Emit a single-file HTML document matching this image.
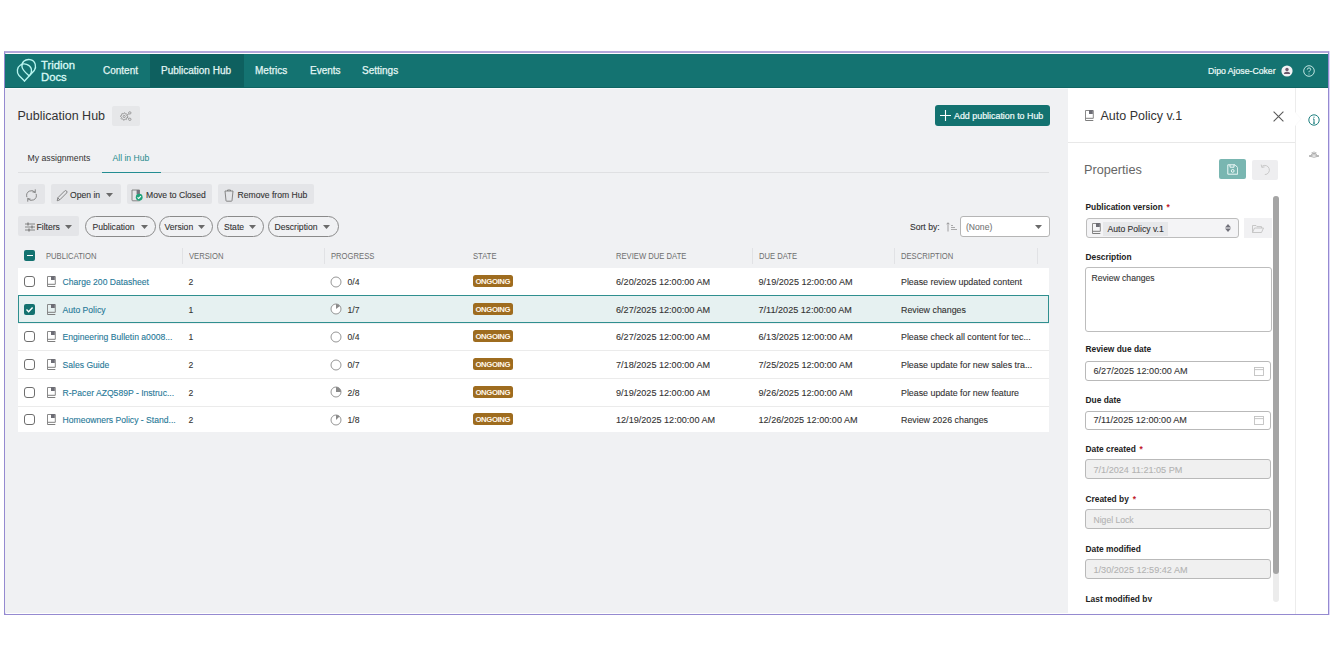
<!DOCTYPE html>
<html><head><meta charset="utf-8">
<style>
*{box-sizing:border-box;margin:0;padding:0}
html,body{width:1334px;height:667px;overflow:hidden;background:#fff;font-family:"Liberation Sans",sans-serif;color:#333}
.a{position:absolute;white-space:nowrap}
#frame{position:absolute;left:4px;top:51px;width:1325px;height:564px;border:1px solid #958ad0;border-top:2px solid #b3a8da;box-shadow:inset 1px 0 0 #d6cff8,1px 0 0 #ddd6fb}
#nav{position:absolute;left:5px;top:54px;width:1323px;height:34px;background:#147371;border-bottom:1px solid #0f6563}
#navact{position:absolute;left:150px;top:54px;width:94px;height:33px;background:#0e605f}
.nt{color:#e3f6f4;font-size:10px;top:65.3px;-webkit-text-stroke:0.25px #e3f6f4}
#main{position:absolute;left:5px;top:88px;width:1063px;height:524.5px;background:#f0f1f3;border-top:1px solid #f8fafb}
#panel{position:absolute;left:1068px;top:88px;width:227px;height:526px;background:#fff}
#rail{position:absolute;left:1295px;top:88px;width:32px;height:526px;background:#fff;border-left:1px solid #ececec}
.btn{position:absolute;top:184px;height:20px;background:#e4e5e8;border-radius:2px}
.pill{position:absolute;top:216px;height:20.5px;border:1px solid #8a8a8a;border-radius:11px}
.t9{font-size:8.6px;color:#333;-webkit-text-stroke:0.1px currentColor}
.hdr{font-size:8.6px;color:#6e6e6e;top:250.5px;transform:scaleX(0.89);transform-origin:0 0}
.row{position:absolute;left:18px;width:1031px;background:#fff;border-bottom:1px solid #ebebeb}
.cb{position:absolute;left:23.5px;width:11.3px;height:11px;border:1.1px solid #6e6e6e;border-radius:3px;background:#fff}
.lnk{color:#1f7897;font-size:8.6px;-webkit-text-stroke:0.1px currentColor}
.badge{position:absolute;left:473px;width:40px;height:12.3px;background:#9e6c1f;border-radius:2.5px;color:#fff7ea;font-size:7.7px;font-weight:bold;text-align:center;line-height:13.3px;letter-spacing:-0.35px;padding-right:0.3px}
.lbl{font-size:8.4px;font-weight:bold;color:#222}
.inp{position:absolute;left:1085px;width:186px;height:20px;border:1px solid #b9b9b9;border-radius:3px;background:#fff}
.dis{background:#f0f0f0}
.star{color:#c0202a;margin-left:1.5px}
</style></head><body>
<div id="frame"></div>
<div id="nav"></div>
<div id="navact"></div>
<!-- logo -->
<svg class="a" style="left:14px;top:56px" width="26" height="28" viewBox="0 0 26 28" fill="none" stroke="#b8f6f0" stroke-width="1.35" stroke-linejoin="round" stroke-linecap="round"><path d="M 10.50 25.00 L 20.30 14.50 C 22.60 11.00 21.80 4.50 16.00 3.60 C 11.00 2.80 7.20 6.50 8.00 11.00 C 8.70 14.50 12.00 17.00 15.20 19.90"/><path d="M 10.50 25.00 L 5.00 19.50 C 2.30 16.50 3.00 11.20 6.50 9.00 C 10.00 6.80 15.80 8.20 17.20 12.50 C 18.00 15.50 17.00 18.00 15.20 19.90"/></svg>
<div class="a" style="left:41px;top:58.5px;font-size:11.3px;line-height:12.5px;color:#d9faf6;-webkit-text-stroke:0.3px #d9faf6">Tridion<br>Docs</div>
<div class="a nt" style="left:103px">Content</div>
<div class="a nt" style="left:161px">Publication Hub</div>
<div class="a nt" style="left:255px">Metrics</div>
<div class="a nt" style="left:310px">Events</div>
<div class="a nt" style="left:362px">Settings</div>
<div class="a" style="left:1208px;top:66px;font-size:8.7px;color:#eefbf9;-webkit-text-stroke:0.2px #eefbf9">Dipo Ajose-Coker</div>
<svg class="a" style="left:1281px;top:65px" width="12" height="12" viewBox="0 0 12 12"><circle cx="6" cy="6" r="5.6" fill="#f2f2f4"/><circle cx="6" cy="4.5" r="1.7" fill="#6d5a6d"/><path d="M2.9 9 Q3 6.8 6 6.8 Q9 6.8 9.1 9 Z" fill="#6d5a6d"/></svg>
<svg class="a" style="left:1302.5px;top:64.5px" width="12" height="12" viewBox="0 0 12 12" fill="none" stroke="#d2f1ed" stroke-width="0.9"><circle cx="6" cy="6" r="5.3"/><path d="M4.3 4.6 Q4.3 2.9 6 2.9 Q7.7 2.9 7.7 4.4 Q7.7 5.4 6.6 5.9 Q6 6.2 6 7.2"/><circle cx="6" cy="8.9" r="0.5" fill="#d2f1ed" stroke="none"/></svg>

<div id="main"></div>
<div id="panel"></div>
<div id="rail"></div>

<!-- title -->
<div class="a" style="left:17.5px;top:108.7px;font-size:12.5px;color:#333">Publication Hub</div>
<div class="a" style="left:112px;top:106px;width:28px;height:19.5px;background:#e6e7e9;border-radius:2px"></div>
<svg class="a" style="left:119.5px;top:110.5px" width="12" height="10" viewBox="0 0 12 10" fill="none" stroke="#8c8c8c" stroke-width="0.8" stroke-linejoin="round"><path d="M4.20 1.80 L4.92 1.87 L5.27 2.91 L5.76 3.17 L6.82 2.88 L7.28 3.44 L6.79 4.43 L6.95 4.95 L7.90 5.50 L7.83 6.22 L6.79 6.57 L6.53 7.06 L6.82 8.12 L6.26 8.58 L5.27 8.09 L4.75 8.25 L4.20 9.20 L3.48 9.13 L3.13 8.09 L2.64 7.83 L1.58 8.12 L1.12 7.56 L1.61 6.57 L1.45 6.05 L0.50 5.50 L0.57 4.78 L1.61 4.43 L1.87 3.94 L1.58 2.88 L2.14 2.42 L3.13 2.91 L3.65 2.75 Z"/><circle cx="4.2" cy="5.5" r="1.1"/><circle cx="9.8" cy="1.9" r="1.2"/><circle cx="9.8" cy="8.3" r="1.2"/><path d="M7.2 4.6 L8.7 2.7 M7.2 6.3 L8.7 7.5"/></svg>
<div class="a" style="left:934.5px;top:105px;width:115.5px;height:20.7px;background:#137270;border-radius:3px"></div>
<svg class="a" style="left:940px;top:110px" width="11" height="11" viewBox="0 0 11 11"><path d="M5.5 0 V11 M0 5.5 H11" stroke="#fff" stroke-width="1.1"/></svg>
<div class="a" style="left:954px;top:111px;font-size:8.9px;color:#effcfa;-webkit-text-stroke:0.2px #effcfa">Add publication to Hub</div>

<!-- tabs -->
<div class="a" style="left:27.5px;top:153px;font-size:8.7px;color:#333">My assignments</div>
<div class="a" style="left:112.5px;top:153px;font-size:8.6px;color:#1f8a8c">All in Hub</div>
<div class="a" style="left:18px;top:172px;width:1031px;height:1px;background:#dfe0e2"></div>
<div class="a" style="left:102px;top:171.5px;width:58.5px;height:1.8px;background:#238d92"></div>

<!-- toolbar -->
<div class="btn" style="left:18px;width:26.5px"></div>
<svg class="a" style="left:24.5px;top:188.5px" width="13" height="13" viewBox="0 0 13 13" fill="none" stroke="#7a7a7a" stroke-width="0.9" stroke-linecap="round" stroke-linejoin="round"><path d="M1.77 7.77 A4.9 4.9 0 0 1 10.25 3.35 M10.25 0.75 L10.25 3.35 L7.69 2.90 M11.23 5.23 A4.9 4.9 0 0 1 2.75 9.65 M2.75 12.25 L2.75 9.65 L5.31 10.10"/></svg>
<div class="btn" style="left:50.5px;width:70px"></div>
<svg class="a" style="left:55.5px;top:188.5px" width="12" height="13" viewBox="0 0 12 13" fill="none" stroke="#7a7a7a" stroke-width="0.9"><path d="M1.2 11.8 L1.8 8.8 L8.6 2 Q9.6 1 10.6 2 Q11.6 3 10.6 4 L3.8 10.8 Z"/><path d="M1.8 8.8 L3.8 10.8"/></svg>
<div class="a t9" style="left:70px;top:190px">Open in</div>
<svg class="a" style="left:106px;top:193px" width="7" height="4" viewBox="0 0 7 4"><path d="M0 0 H7 L3.5 4 Z" fill="#6a6a6a"/></svg>
<div class="btn" style="left:127px;width:84.5px"></div>
<svg class="a" style="left:131px;top:188.5px" width="13" height="13" viewBox="0 0 13 13"><path d="M1 1 H8.5 V11.8 H1.8 Q1 11.8 1 11 Z" fill="none" stroke="#7a7a7a" stroke-width="0.9"/><rect x="5.6" y="1" width="2.9" height="4.2" fill="#75757d"/><circle cx="8.2" cy="8.2" r="3.4" fill="#20a27a"/><path d="M6.5 8.3 L7.7 9.4 L9.9 7.1" fill="none" stroke="#fff" stroke-width="1.1"/></svg>
<div class="a t9" style="left:146px;top:190px">Move to Closed</div>
<div class="btn" style="left:218px;width:96px"></div>
<svg class="a" style="left:223.5px;top:188.5px" width="10" height="13" viewBox="0 0 10 13" fill="none" stroke="#7a7a7a" stroke-width="0.9"><path d="M1 2 H9 L8 11.6 Q8 12.2 7.4 12.2 H2.6 Q2 12.2 2 11.6 Z"/><path d="M3.5 2 V1 H6.5 V2"/></svg>
<div class="a t9" style="left:237.5px;top:190px">Remove from Hub</div>

<div class="btn" style="left:18px;top:216px;width:61px;height:19.5px"></div>
<svg class="a" style="left:25px;top:222px" width="10" height="10" viewBox="0 0 10 10" fill="none" stroke="#7a7a7a" stroke-width="0.9"><path d="M0 2 H10 M0 5 H10 M0 8 H10"/><path d="M3 0.5 V3.5 M7 3.5 V6.5 M4 6.5 V9.5" stroke-width="1.3"/></svg>
<div class="a t9" style="left:36.5px;top:222px">Filters</div>
<svg class="a" style="left:65px;top:225px" width="7" height="4" viewBox="0 0 7 4"><path d="M0 0 H7 L3.5 4 Z" fill="#6a6a6a"/></svg>
<div class="pill" style="left:85px;width:70.5px"></div>
<div class="a t9" style="left:92.5px;top:222px">Publication</div>
<svg class="a" style="left:140.5px;top:225px" width="7" height="4" viewBox="0 0 7 4"><path d="M0 0 H7 L3.5 4 Z" fill="#6a6a6a"/></svg>
<div class="pill" style="left:158.5px;width:54.5px"></div>
<div class="a t9" style="left:164.5px;top:222px">Version</div>
<svg class="a" style="left:198px;top:225px" width="7" height="4" viewBox="0 0 7 4"><path d="M0 0 H7 L3.5 4 Z" fill="#6a6a6a"/></svg>
<div class="pill" style="left:217px;width:47px"></div>
<div class="a t9" style="left:224px;top:222px">State</div>
<svg class="a" style="left:249px;top:225px" width="7" height="4" viewBox="0 0 7 4"><path d="M0 0 H7 L3.5 4 Z" fill="#6a6a6a"/></svg>
<div class="pill" style="left:268px;width:70.5px"></div>
<div class="a t9" style="left:274.5px;top:222px">Description</div>
<svg class="a" style="left:323px;top:225px" width="7" height="4" viewBox="0 0 7 4"><path d="M0 0 H7 L3.5 4 Z" fill="#6a6a6a"/></svg>

<div class="a t9" style="left:910px;top:222px">Sort by:</div>
<svg class="a" style="left:946px;top:222px" width="12" height="10" viewBox="0 0 12 10" fill="none" stroke="#8a8a8a" stroke-width="0.8"><path d="M2 9.5 V0.8 M0.5 2.3 L2 0.8 L3.5 2.3"/><path d="M5 3.5 H7 M5 5.5 H9 M5 7.5 H11" stroke-width="0.7"/></svg>
<div class="a" style="left:960px;top:216px;width:89.5px;height:20.5px;background:#fff;border:1px solid #b5b5b5;border-radius:3px"></div>
<div class="a t9" style="left:966px;top:222px;color:#777">(None)</div>
<svg class="a" style="left:1035px;top:225px" width="7" height="4" viewBox="0 0 7 4"><path d="M0 0 H7 L3.5 4 Z" fill="#6a6a6a"/></svg>

<!-- table header -->
<div class="a" style="left:24px;top:249.5px;width:11px;height:11px;background:#137270;border-radius:2px"></div>
<div class="a" style="left:26.5px;top:254.5px;width:6px;height:1.5px;background:#fff"></div>
<div class="a hdr" style="left:46px">PUBLICATION</div>
<div class="a hdr" style="left:188.5px">VERSION</div>
<div class="a hdr" style="left:331px">PROGRESS</div>
<div class="a hdr" style="left:473px">STATE</div>
<div class="a hdr" style="left:616px">REVIEW DUE DATE</div>
<div class="a hdr" style="left:758.5px">DUE DATE</div>
<div class="a hdr" style="left:901px">DESCRIPTION</div>

<!-- rows -->
<div class="a" style="left:182px;top:248px;width:1px;height:16px;background:#e1e2e5"></div><div class="a" style="left:324px;top:248px;width:1px;height:16px;background:#e1e2e5"></div><div class="a" style="left:752px;top:248px;width:1px;height:16px;background:#e1e2e5"></div><div class="a" style="left:894px;top:248px;width:1px;height:16px;background:#e1e2e5"></div><div class="a" style="left:1037px;top:248px;width:1px;height:16px;background:#e1e2e5"></div>
<div class="row" style="top:267.5px;height:28px"></div>
<div class="row" style="top:295px;height:28px;background:#e6f1f1;border:1px solid #2f8f8f"></div>
<div class="row" style="top:323.5px;height:27px"></div>
<div class="row" style="top:350.5px;height:28px"></div>
<div class="row" style="top:378.5px;height:28px"></div>
<div class="row" style="top:406.5px;height:25.5px;border-bottom:0"></div>

<!-- ROWCONTENT -->
<div class="cb" style="top:276.0px"></div>
<svg class="a" style="left:47px;top:276.0px" width="9" height="11" viewBox="0 0 9 11" fill="none" stroke="#7d7d7d" stroke-width="0.9"><path d="M0.5 10.5 V0.5 H8.3 V8.3"/><path d="M0.5 8.3 H8.3 M0.5 10.5 H8.3" stroke-width="1"/><rect x="4" y="0" width="3.8" height="4" fill="#6d6d75" stroke="none"/></svg>
<div class="a lnk" style="left:62.5px;top:276.8px">Charge 200 Datasheet</div>
<div class="a t9" style="left:188.5px;top:276.8px">2</div>
<svg class="a" style="left:330px;top:275.5px" width="12" height="12" viewBox="0 0 12 12"><circle cx="6" cy="6" r="5" fill="#fff" stroke="#8a8a8a" stroke-width="0.9"/></svg>
<div class="a t9" style="left:347.5px;top:276.8px">0/4</div>
<div class="badge" style="top:275px">ONGOING</div>
<div class="a t9" style="left:616px;top:277.1px;font-size:9.1px">6/20/2025 12:00:00 AM</div>
<div class="a t9" style="left:758.5px;top:277.1px;font-size:9.1px">9/19/2025 12:00:00 AM</div>
<div class="a t9" style="left:901px;top:277.0px;font-size:8.85px">Please review updated content</div>
<div class="a" style="left:24px;top:303.8px;width:11px;height:11px;background:#137270;border-radius:2px"></div>
<svg class="a" style="left:24px;top:303.8px" width="11" height="11" viewBox="0 0 11 11"><path d="M2.5 5.6 L4.6 7.7 L8.6 3.4" fill="none" stroke="#fff" stroke-width="1.4"/></svg>
<svg class="a" style="left:47px;top:303.8px" width="9" height="11" viewBox="0 0 9 11" fill="none" stroke="#7d7d7d" stroke-width="0.9"><path d="M0.5 10.5 V0.5 H8.3 V8.3"/><path d="M0.5 8.3 H8.3 M0.5 10.5 H8.3" stroke-width="1"/><rect x="4" y="0" width="3.8" height="4" fill="#6d6d75" stroke="none"/></svg>
<div class="a lnk" style="left:62.5px;top:304.6px">Auto Policy</div>
<div class="a t9" style="left:188.5px;top:304.6px">1</div>
<svg class="a" style="left:330px;top:303.3px" width="12" height="12" viewBox="0 0 12 12"><circle cx="6" cy="6" r="5" fill="#fff" stroke="#8a8a8a" stroke-width="0.9"/><path d="M6 6 L6 1 A5 5 0 0 1 9.91 2.88 Z" fill="#8a8a8a"/></svg>
<div class="a t9" style="left:347.5px;top:304.6px">1/7</div>
<div class="badge" style="top:303px">ONGOING</div>
<div class="a t9" style="left:616px;top:304.90000000000003px;font-size:9.1px">6/27/2025 12:00:00 AM</div>
<div class="a t9" style="left:758.5px;top:304.90000000000003px;font-size:9.1px">7/11/2025 12:00:00 AM</div>
<div class="a t9" style="left:901px;top:304.8px;font-size:8.85px">Review changes</div>
<div class="cb" style="top:331.3px"></div>
<svg class="a" style="left:47px;top:331.3px" width="9" height="11" viewBox="0 0 9 11" fill="none" stroke="#7d7d7d" stroke-width="0.9"><path d="M0.5 10.5 V0.5 H8.3 V8.3"/><path d="M0.5 8.3 H8.3 M0.5 10.5 H8.3" stroke-width="1"/><rect x="4" y="0" width="3.8" height="4" fill="#6d6d75" stroke="none"/></svg>
<div class="a lnk" style="left:62.5px;top:332.1px">Engineering Bulletin a0008...</div>
<div class="a t9" style="left:188.5px;top:332.1px">1</div>
<svg class="a" style="left:330px;top:330.8px" width="12" height="12" viewBox="0 0 12 12"><circle cx="6" cy="6" r="5" fill="#fff" stroke="#8a8a8a" stroke-width="0.9"/></svg>
<div class="a t9" style="left:347.5px;top:332.1px">0/4</div>
<div class="badge" style="top:330px">ONGOING</div>
<div class="a t9" style="left:616px;top:332.40000000000003px;font-size:9.1px">6/27/2025 12:00:00 AM</div>
<div class="a t9" style="left:758.5px;top:332.40000000000003px;font-size:9.1px">6/13/2025 12:00:00 AM</div>
<div class="a t9" style="left:901px;top:332.3px;font-size:8.85px">Please check all content for tec...</div>
<div class="cb" style="top:359.0px"></div>
<svg class="a" style="left:47px;top:359.0px" width="9" height="11" viewBox="0 0 9 11" fill="none" stroke="#7d7d7d" stroke-width="0.9"><path d="M0.5 10.5 V0.5 H8.3 V8.3"/><path d="M0.5 8.3 H8.3 M0.5 10.5 H8.3" stroke-width="1"/><rect x="4" y="0" width="3.8" height="4" fill="#6d6d75" stroke="none"/></svg>
<div class="a lnk" style="left:62.5px;top:359.8px">Sales Guide</div>
<div class="a t9" style="left:188.5px;top:359.8px">2</div>
<svg class="a" style="left:330px;top:358.5px" width="12" height="12" viewBox="0 0 12 12"><circle cx="6" cy="6" r="5" fill="#fff" stroke="#8a8a8a" stroke-width="0.9"/></svg>
<div class="a t9" style="left:347.5px;top:359.8px">0/7</div>
<div class="badge" style="top:358px">ONGOING</div>
<div class="a t9" style="left:616px;top:360.1px;font-size:9.1px">7/18/2025 12:00:00 AM</div>
<div class="a t9" style="left:758.5px;top:360.1px;font-size:9.1px">7/25/2025 12:00:00 AM</div>
<div class="a t9" style="left:901px;top:360.0px;font-size:8.85px">Please update for new sales tra...</div>
<div class="cb" style="top:386.7px"></div>
<svg class="a" style="left:47px;top:386.7px" width="9" height="11" viewBox="0 0 9 11" fill="none" stroke="#7d7d7d" stroke-width="0.9"><path d="M0.5 10.5 V0.5 H8.3 V8.3"/><path d="M0.5 8.3 H8.3 M0.5 10.5 H8.3" stroke-width="1"/><rect x="4" y="0" width="3.8" height="4" fill="#6d6d75" stroke="none"/></svg>
<div class="a lnk" style="left:62.5px;top:387.5px">R-Pacer AZQ589P - Instruc...</div>
<div class="a t9" style="left:188.5px;top:387.5px">2</div>
<svg class="a" style="left:330px;top:386.2px" width="12" height="12" viewBox="0 0 12 12"><circle cx="6" cy="6" r="5" fill="#fff" stroke="#8a8a8a" stroke-width="0.9"/><path d="M6 6 L6 1 A5 5 0 0 1 11.00 6.00 Z" fill="#8a8a8a"/></svg>
<div class="a t9" style="left:347.5px;top:387.5px">2/8</div>
<div class="badge" style="top:386px">ONGOING</div>
<div class="a t9" style="left:616px;top:387.8px;font-size:9.1px">9/19/2025 12:00:00 AM</div>
<div class="a t9" style="left:758.5px;top:387.8px;font-size:9.1px">9/26/2025 12:00:00 AM</div>
<div class="a t9" style="left:901px;top:387.7px;font-size:8.85px">Please update for new feature</div>
<div class="cb" style="top:414.0px"></div>
<svg class="a" style="left:47px;top:414.0px" width="9" height="11" viewBox="0 0 9 11" fill="none" stroke="#7d7d7d" stroke-width="0.9"><path d="M0.5 10.5 V0.5 H8.3 V8.3"/><path d="M0.5 8.3 H8.3 M0.5 10.5 H8.3" stroke-width="1"/><rect x="4" y="0" width="3.8" height="4" fill="#6d6d75" stroke="none"/></svg>
<div class="a lnk" style="left:62.5px;top:414.8px">Homeowners Policy - Stand...</div>
<div class="a t9" style="left:188.5px;top:414.8px">2</div>
<svg class="a" style="left:330px;top:413.5px" width="12" height="12" viewBox="0 0 12 12"><circle cx="6" cy="6" r="5" fill="#fff" stroke="#8a8a8a" stroke-width="0.9"/><path d="M6 6 L6 1 A5 5 0 0 1 9.54 2.46 Z" fill="#8a8a8a"/></svg>
<div class="a t9" style="left:347.5px;top:414.8px">1/8</div>
<div class="badge" style="top:413px">ONGOING</div>
<div class="a t9" style="left:616px;top:415.1px;font-size:9.1px">12/19/2025 12:00:00 AM</div>
<div class="a t9" style="left:758.5px;top:415.1px;font-size:9.1px">12/26/2025 12:00:00 AM</div>
<div class="a t9" style="left:901px;top:415.0px;font-size:8.85px">Review 2026 changes</div>
<!-- /ROWCONTENT -->
<!-- panel -->
<div class="a" style="left:1068px;top:142px;width:227px;height:1px;background:#e8e8e8"></div>
<svg class="a" style="left:1085px;top:110px" width="9" height="11" viewBox="0 0 9 11" fill="none" stroke="#7d7d7d" stroke-width="0.9"><path d="M0.5 10.5 V0.5 H8.3 V8.3"/><path d="M0.5 8.3 H8.3 M0.5 10.5 H8.3" stroke-width="1"/><rect x="4" y="0" width="3.8" height="4" fill="#6d6d75" stroke="none"/></svg>
<div class="a" style="left:1100.5px;top:109px;font-size:12.5px;color:#333">Auto Policy v.1</div>
<svg class="a" style="left:1273px;top:111px" width="11" height="11" viewBox="0 0 11 11"><path d="M0.6 0.6 L10.4 10.4 M10.4 0.6 L0.6 10.4" stroke="#5a5a5a" stroke-width="1.1"/></svg>
<div class="a" style="left:1084px;top:163px;font-size:12.7px;color:#666">Properties</div>
<div class="a" style="left:1218.5px;top:159.3px;width:27.5px;height:20px;background:#79b6b1;border-radius:2px"></div>
<svg class="a" style="left:1226.5px;top:164px" width="11.5" height="11" viewBox="0 0 11.5 11" fill="none" stroke="#eefaf8" stroke-width="1"><path d="M0.8 0.8 H8 L10.7 3.5 V10.2 H0.8 Z"/><path d="M3 0.8 V3.2 H7 V0.8"/><circle cx="5.7" cy="6.9" r="1.4"/></svg>
<div class="a" style="left:1252.3px;top:159.8px;width:26.2px;height:19.8px;background:#eeeef0;border-radius:2px"></div>
<svg class="a" style="left:1259.5px;top:163.5px" width="12" height="11.5" viewBox="0 0 12 11.5" fill="none" stroke="#c4c4c4" stroke-width="0.9"><path d="M2.2 2.2 A4.6 4.6 0 1 1 4.8 10.6"/><path d="M1.2 0.6 L1.8 3.4 L4.6 2.9"/></svg>

<div class="a lbl" style="left:1085.5px;top:202px">Publication version <span class="star">*</span></div>
<div class="a" style="left:1085.5px;top:218.3px;width:153px;height:20.2px;background:#f4f4f6;border:1px solid #bdbdbd;border-radius:3px"></div>
<div class="a" style="left:1103px;top:222.4px;width:65px;height:13.3px;background:#e7e8ea"></div>
<svg class="a" style="left:1092px;top:222.5px" width="9" height="11" viewBox="0 0 9 11" fill="none" stroke="#7d7d7d" stroke-width="0.9"><path d="M0.5 10.5 V0.5 H8.3 V8.3"/><path d="M0.5 8.3 H8.3 M0.5 10.5 H8.3" stroke-width="1"/><rect x="4" y="0" width="3.8" height="4" fill="#6d6d75" stroke="none"/></svg>
<div class="a t9" style="left:1107.5px;top:223.6px">Auto Policy v.1</div>
<svg class="a" style="left:1224.5px;top:224px" width="6" height="8" viewBox="0 0 6 8"><path d="M0 3.4 L3 0 L6 3.4 Z M0 4.6 H6 L3 8 Z" fill="#70707a"/></svg>
<div class="a" style="left:1244.2px;top:218px;width:27.6px;height:19.5px;background:#f1f1f3"></div>
<svg class="a" style="left:1252px;top:224.5px" width="12" height="8" viewBox="0 0 12 8" fill="none" stroke="#c2c2c2" stroke-width="0.9"><path d="M0.5 7.5 V0.5 H4 L5 1.6 H9.5 V3"/><path d="M0.5 7.5 L2.5 3 H11.5 L9.5 7.5 Z"/></svg>

<div class="a lbl" style="left:1085.5px;top:252.3px">Description</div>
<div class="a" style="left:1085px;top:267.2px;width:186.5px;height:65px;border:1px solid #bdbdbd;border-radius:3px"></div>
<div class="a t9" style="left:1091.5px;top:272.8px">Review changes</div>

<div class="a lbl" style="left:1085.5px;top:344.1px">Review due date</div>
<div class="inp" style="top:360.5px"></div>
<div class="a t9" style="left:1093.5px;top:365.8px;font-size:9.1px">6/27/2025 12:00:00 AM</div>
<svg class="a" style="left:1254px;top:366.5px" width="10" height="9" viewBox="0 0 10 9" fill="none" stroke="#c2c2c2" stroke-width="0.9"><rect x="0.5" y="0.5" width="9" height="8"/><path d="M0.5 2.6 H9.5"/></svg>

<div class="a lbl" style="left:1085.5px;top:395.1px">Due date</div>
<div class="inp" style="top:410.5px;height:19px"></div>
<div class="a t9" style="left:1093.5px;top:415.3px;font-size:9.1px">7/11/2025 12:00:00 AM</div>
<svg class="a" style="left:1254px;top:415.5px" width="10" height="9" viewBox="0 0 10 9" fill="none" stroke="#c2c2c2" stroke-width="0.9"><rect x="0.5" y="0.5" width="9" height="8"/><path d="M0.5 2.6 H9.5"/></svg>

<div class="a lbl" style="left:1085.5px;top:444.3px">Date created <span class="star">*</span></div>
<div class="inp dis" style="top:459.3px"></div>
<div class="a t9" style="left:1093.5px;top:464.8px;font-size:9.1px;color:#b3b3b3">7/1/2024 11:21:05 PM</div>

<div class="a lbl" style="left:1085.5px;top:494.1px">Created by <span class="star">*</span></div>
<div class="inp dis" style="top:509.4px"></div>
<div class="a t9" style="left:1093.5px;top:515px;color:#b3b3b3">Nigel Lock</div>

<div class="a lbl" style="left:1085.5px;top:543.8px">Date modified</div>
<div class="inp dis" style="top:559.1px"></div>
<div class="a t9" style="left:1093.5px;top:564.8px;font-size:9.1px;color:#b3b3b3">1/30/2025 12:59:42 AM</div>

<div class="a" style="left:1068px;top:588px;width:200px;height:14px;overflow:hidden"><div class="a lbl" style="left:17.5px;top:6.4px">Last modified by</div></div>

<div class="a" style="left:1273.3px;top:196px;width:5.7px;height:406px;background:#ececec;border-radius:3px"></div>
<div class="a" style="left:1273.3px;top:196px;width:5.7px;height:377.5px;background:#a5a5a5;border-radius:3px"></div>

<!-- rail -->
<svg class="a" style="left:1295px;top:112px" width="7" height="14" viewBox="0 0 7 14"><path d="M0 0 L6 7 L0 14 Z" fill="#fff"/><path d="M0 0 L6 7 L0 14" fill="none" stroke="#f6f6f6" stroke-width="0.6"/></svg>
<svg class="a" style="left:1307.5px;top:113.5px" width="12" height="12" viewBox="0 0 12 12" fill="none" stroke="#1f8080" stroke-width="1"><circle cx="6" cy="6" r="5.2"/><path d="M6 5 V9.2 M5 5 H6 M5 9.2 H7" stroke-width="1"/><circle cx="6" cy="3.2" r="0.6" fill="#1f8080" stroke="none"/></svg>
<svg class="a" style="left:1307.5px;top:150.5px" width="12" height="8" viewBox="0 0 12 8" fill="none" stroke="#9a9a9a" stroke-width="0.8"><path d="M1 5 Q6 2.5 11 5 Q6 7.5 1 5 Z"/><path d="M3 3.5 Q6 1 9 3.5"/><path d="M6 0.5 V2.2 M4 1 L4.6 2.5 M8 1 L7.4 2.5"/></svg>
</body></html>
